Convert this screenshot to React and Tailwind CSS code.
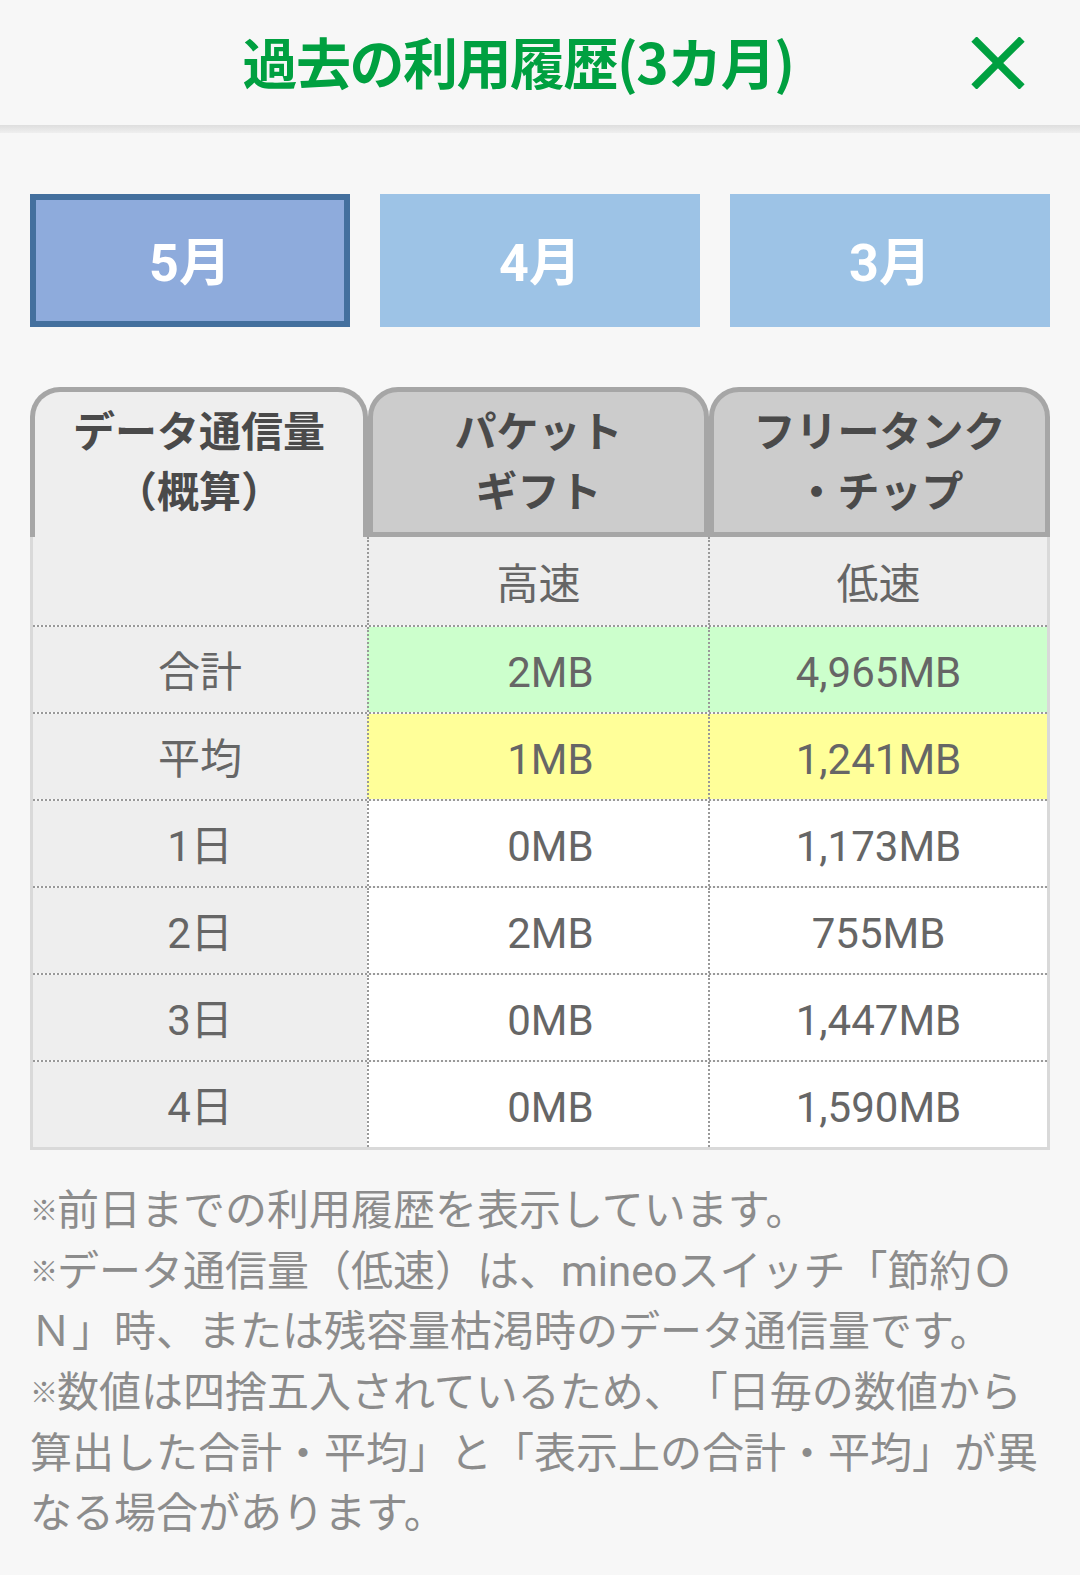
export default function App() {
  const rows = [
    { label: '合計', a: '2MB', b: '4,965MB', bg: 'bg-[#ccffcc]' },
    { label: '平均', a: '1MB', b: '1,241MB', bg: 'bg-[#ffff99]' },
    { label: '1日', a: '0MB', b: '1,173MB', bg: 'bg-white' },
    { label: '2日', a: '2MB', b: '755MB', bg: 'bg-white' },
    { label: '3日', a: '0MB', b: '1,447MB', bg: 'bg-white' },
    { label: '4日', a: '0MB', b: '1,590MB', bg: 'bg-white' },
  ];
  const Mark = () => (
    <span className="inline-block w-[27px] text-[28px] leading-none align-[4px]">※</span>
  );
  const notes = [
    [true, '前日までの利用履歴を表示しています。'],
    [true, 'データ通信量（低速）は、mineoスイッチ「節約Ｏ'],
    [false, 'Ｎ」時、または残容量枯渇時のデータ通信量です。'],
    [true, '数値は四捨五入されているため、「日毎の数値から'],
    [false, '算出した合計・平均」と「表示上の合計・平均」が異'],
    [false, 'なる場合があります。'],
  ];
  return (
    <div className="w-[1080px] min-h-[1575px] bg-[#f7f7f7] [font-family:Roboto,'Noto_Sans_CJK_JP',sans-serif] [text-spacing-trim:space-all]">
      {/* Header */}
      <div className="relative h-[125px] flex items-center">
        <div className="w-full pr-[44px] pb-[5px] text-center text-[55px] leading-none font-bold text-[#00a040] [font-family:'Noto_Sans_CJK_JP',sans-serif] tracking-[-1.5px]">
          過去の利用履歴(3カ月)
        </div>
        <svg className="absolute right-[55px] top-[37px]" width="54" height="52" viewBox="0 0 54 52">
          <line x1="3" y1="2" x2="51" y2="50" stroke="#00a040" strokeWidth="7.5" />
          <line x1="51" y1="2" x2="3" y2="50" stroke="#00a040" strokeWidth="7.5" />
        </svg>
      </div>
      <div className="h-[8px] bg-gradient-to-b from-[#dedede] to-[#efefef]" />

      {/* Month buttons */}
      <div className="px-[30px] mt-[61px] grid grid-cols-3 gap-[30px]">
        <div className="h-[133px] bg-[#8eabdc] border-[6px] border-[#44709e] flex items-center justify-center pt-[6px] text-white text-[52px] font-bold">
          5月
        </div>
        <div className="h-[133px] bg-[#9dc3e6] flex items-center justify-center pt-[6px] text-white text-[52px] font-bold">
          4月
        </div>
        <div className="h-[133px] bg-[#9dc3e6] flex items-center justify-center pt-[6px] text-white text-[52px] font-bold">
          3月
        </div>
      </div>

      {/* Table */}
      <div className="px-[30px] mt-[60px]">
        <div className="grid grid-cols-[338px_341px_341px] h-[150px]">
          <div className="border-[5px] border-b-0 border-[#a6a6a6] rounded-t-[30px] bg-[#eeeeee] flex flex-col items-center justify-center text-[42px] leading-[60px] font-bold text-[#4a4a4a] pb-[4px]">
            <span>データ通信量</span>
            <span>（概算）</span>
          </div>
          <div className="border-[5px] border-[#a6a6a6] rounded-t-[30px] bg-[#cccccc] flex flex-col items-center justify-center text-[42px] leading-[60px] font-bold text-[#4a4a4a] pt-[2px]">
            <span>パケット</span>
            <span>ギフト</span>
          </div>
          <div className="border-[5px] border-[#a6a6a6] rounded-t-[30px] bg-[#cccccc] flex flex-col items-center justify-center text-[42px] leading-[60px] font-bold text-[#4a4a4a] pt-[2px]">
            <span>フリータンク</span>
            <span>・チップ</span>
          </div>
        </div>
        <div className="border-x-[3px] border-b-[3px] border-[#d9d9d9] text-[#666666] text-[42px]">
          <div className="grid grid-cols-[334px_341px_1fr] h-[88px] bg-[#eeeeee]">
            <div />
            <div className="border-l-2 border-dotted border-[#999999] flex items-center justify-center pt-[6px]">高速</div>
            <div className="border-l-2 border-dotted border-[#999999] flex items-center justify-center pt-[6px]">低速</div>
          </div>
          {rows.map((r) => (
            <div key={r.label} className="grid grid-cols-[334px_341px_1fr] h-[87px] border-t-2 border-dotted border-[#999999]">
              <div className="bg-[#eeeeee] flex items-center justify-center pt-[6px]">{r.label}</div>
              <div className={`${r.bg} border-l-2 border-dotted border-[#999999] flex items-center justify-center pl-[24px] pt-[6px]`}>{r.a}</div>
              <div className={`${r.bg} border-l-2 border-dotted border-[#999999] flex items-center justify-center pt-[6px]`}>{r.b}</div>
            </div>
          ))}
        </div>
      </div>

      {/* Notes */}
      <div className="px-[30px] mt-[31px] pb-[30px] text-[42px] text-[#8c8c8c]">
        {notes.map(([m, n]) => (
          <div key={n} className="whitespace-nowrap h-[60.7px] leading-[60.7px]">
            {m && <Mark />}
            {n}
          </div>
        ))}
      </div>
    </div>
  );
}
